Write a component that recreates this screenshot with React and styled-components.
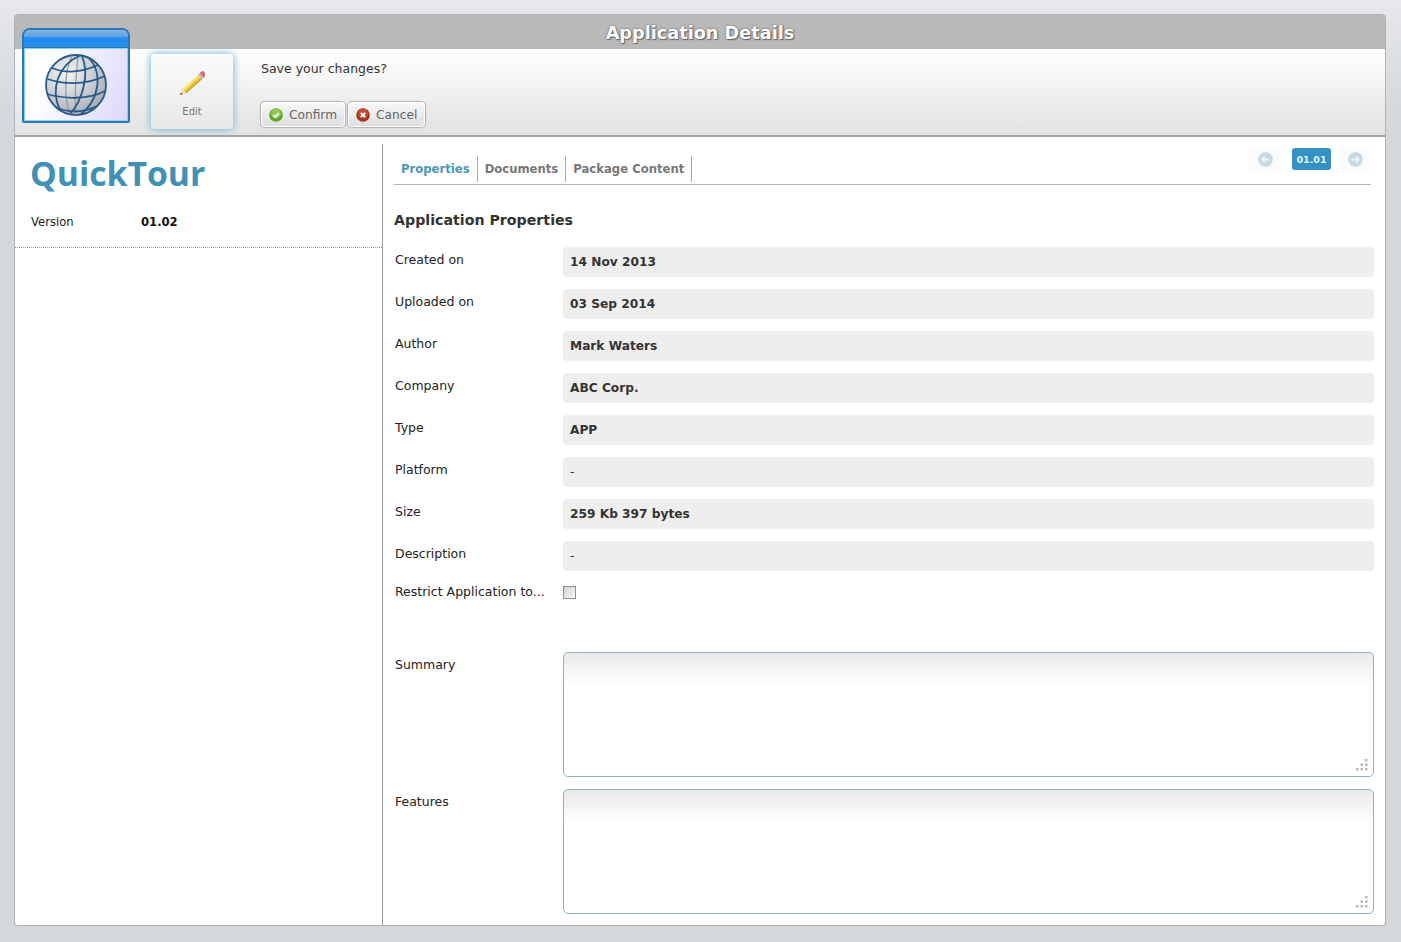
import React from "react";
import styled, { createGlobalStyle } from "styled-components";

const GlobalStyle = createGlobalStyle`
  html, body {
    margin: 0;
    padding: 0;
  }
  body {
    background: linear-gradient(#e6e8eb, #d5d8db 120px);
    min-height: 942px;
    font-family: "DejaVu Sans", Verdana, sans-serif;
    color: #222;
  }
`;

const properties = [
  { label: "Created on", value: "14 Nov 2013" },
  { label: "Uploaded on", value: "03 Sep 2014" },
  { label: "Author", value: "Mark Waters" },
  { label: "Company", value: "ABC Corp." },
  { label: "Type", value: "APP" },
  { label: "Platform", value: "-", plain: true },
  { label: "Size", value: "259 Kb 397 bytes" },
  { label: "Description", value: "-", plain: true },
];

function Globe() {
  return (
    <svg width="64" height="64" viewBox="0 0 64 64">
      <defs>
        <radialGradient id="globeFill" cx="0.35" cy="0.3" r="0.85">
          <stop offset="0" stopColor="#f4f5f6" />
          <stop offset="0.6" stopColor="#c2c6cb" />
          <stop offset="1" stopColor="#98a0a9" />
        </radialGradient>
      </defs>
      <circle cx="32" cy="32" r="30" fill="url(#globeFill)" stroke="#27598a" strokeWidth="1.800" />
      <g fill="none" stroke="#959ba1" strokeWidth="1.300">
        <path d="M28 2.500 C20 20 20 44 26 61" />
        <path d="M34 2.500 C32 22 30 44 32 62" />
      </g>
      <g fill="none" stroke="#27598a" strokeWidth="1.800">
        <path d="M8 15 C20 20 36 20 54 12" />
        <path d="M3.500 26 C18 31 40 33 61 23" />
        <path d="M3 41 C20 46 44 47 61 38" />
        <path d="M11 54 C24 60 40 60 53 53" />
        <path d="M36 2.500 C14 12 6 36 16 57" />
        <path d="M38 3 C46 22 38 48 26 61" />
        <path d="M45 5 C60 22 54 48 37 61" />
      </g>
    </svg>
  );
}

function Pencil() {
  return (
    <svg width="26" height="26" viewBox="0 0 26 26">
      <g transform="translate(1 25) rotate(-42)">
        <path d="M0 0 L6 -3 V3 Z" fill="#ead9b4" />
        <path d="M0 0 L2.500 -1.200 V1.200 Z" fill="#4a4a4a" />
        <rect x="6" y="-3" width="21" height="2" fill="#fbe684" />
        <rect x="6" y="-1" width="21" height="2" fill="#f4cc35" />
        <rect x="6" y="1" width="21" height="2" fill="#d9a520" />
        <rect x="27" y="-3" width="2" height="6" fill="#b9b9b9" />
        <path d="M29 -3 H32 Q33.500 -3 33.500 -1.500 V1.500 Q33.500 3 32 3 H29 Z" fill="#cf6f70" />
      </g>
    </svg>
  );
}

function ConfirmIcon() {
  return (
    <svg width="14" height="14" viewBox="0 0 14 14">
      <circle cx="7" cy="7" r="6.800" fill="#5da52c" />
      <circle cx="7" cy="5.500" r="5" fill="#8ccb4e" />
      <path d="M4.300 7.200 L6.200 9.100 L9.800 5.200" fill="none" stroke="#fff" strokeWidth="1.800" />
    </svg>
  );
}

function CancelIcon() {
  return (
    <svg width="14" height="14" viewBox="0 0 14 14">
      <circle cx="7" cy="7" r="6.800" fill="#a8341a" />
      <circle cx="7" cy="5.500" r="5" fill="#c2512f" />
      <path d="M4.800 4.800 L9.200 9.200 M9.200 4.800 L4.800 9.200" fill="none" stroke="#fff" strokeWidth="1.900" />
    </svg>
  );
}

function ArrowIcon({ right }) {
  return (
    <svg width="15" height="15" viewBox="0 0 15 15">
      <circle cx="7.500" cy="7.500" r="7.300" fill="#c3d9e6" />
      <path
        d={right ? "M3.500 7.500 H11 M8 4.500 L11 7.500 L8 10.500" : "M11.500 7.500 H4 M7 4.500 L4 7.500 L7 10.500"}
        fill="none"
        stroke="#eef5f9"
        strokeWidth="1.800"
      />
    </svg>
  );
}

function Grip() {
  return (
    <GripIcon width="12" height="12" viewBox="0 0 12 12">
      <g fill="#b8b8b8">
        <rect x="9" y="0" width="2.500" height="2.500" />
        <rect x="4.500" y="4.500" width="2.500" height="2.500" />
        <rect x="9" y="4.500" width="2.500" height="2.500" />
        <rect x="0" y="9" width="2.500" height="2.500" />
        <rect x="4.500" y="9" width="2.500" height="2.500" />
        <rect x="9" y="9" width="2.500" height="2.500" />
      </g>
    </GripIcon>
  );
}

export default function App() {
  return (
    <>
      <GlobalStyle />
      <Page>
        <Panel>
          <TitleBar>Application Details</TitleBar>
          <AppIcon>
            <AppIconTop />
            <AppIconBody>
              <Globe />
            </AppIconBody>
          </AppIcon>
          <Toolbar>
            <EditButton>
              <Pencil />
              <span>Edit</span>
            </EditButton>
            <Prompt>
              <PromptText>Save your changes?</PromptText>
              <PromptActions>
                <ActionButton>
                  <ConfirmIcon />
                  Confirm
                </ActionButton>
                <ActionButton>
                  <CancelIcon />
                  Cancel
                </ActionButton>
              </PromptActions>
            </Prompt>
          </Toolbar>
          <Content>
            <Sidebar>
              <AppName>QuickTour</AppName>
              <VersionRow>
                <VersionLabel>Version</VersionLabel>
                <VersionValue>01.02</VersionValue>
              </VersionRow>
            </Sidebar>
            <Main>
              <TabBar>
                <Tab $active>Properties</Tab>
                <Tab>Documents</Tab>
                <Tab>Package Content</Tab>
                <Pager>
                  <PagerArrow>
                    <ArrowIcon />
                  </PagerArrow>
                  <PagerCurrent>01.01</PagerCurrent>
                  <PagerArrow $next>
                    <ArrowIcon right />
                  </PagerArrow>
                </Pager>
              </TabBar>
              <SectionTitle>Application Properties</SectionTitle>
              <Rows>
                {properties.map((prop) => (
                  <Row key={prop.label}>
                    <Label>{prop.label}</Label>
                    <Value $plain={prop.plain}>{prop.value}</Value>
                  </Row>
                ))}
              </Rows>
              <CheckRow>
                <CheckLabel>Restrict Application to...</CheckLabel>
                <Check type="checkbox" />
              </CheckRow>
              <AreaRow>
                <Label>Summary</Label>
                <AreaBox>
                  <Area />
                  <Grip />
                </AreaBox>
              </AreaRow>
              <AreaRow>
                <Label>Features</Label>
                <AreaBox>
                  <Area />
                  <Grip />
                </AreaBox>
              </AreaRow>
            </Main>
          </Content>
        </Panel>
      </Page>
    </>
  );
}

const Page = styled.div`
  padding: 15px 16px 0 15px;
  width: 1370px;
`;

const Panel = styled.div`
  position: relative;
  width: 1370px;
  height: 910px;
  background: #fff;
  border-radius: 3px;
  box-shadow: 0 0 0 1px #b0b2b4;
  overflow: hidden;
`;

const TitleBar = styled.div`
  height: 34px;
  background: #b9b9b9;
  color: #fff;
  font-size: 17.700px;
  font-weight: bold;
  line-height: 36px;
  text-align: center;
  text-shadow: 0 0 2px #555, 1px 1px 1px #666;
`;

const AppIcon = styled.div`
  position: absolute;
  left: 7px;
  top: 13px;
  width: 108px;
  height: 95px;
  box-sizing: border-box;
  display: flex;
  flex-direction: column;
  border: 2px solid #2a78b8;
  border-radius: 8px 8px 2px 2px;
  overflow: hidden;
`;

const AppIconTop = styled.div`
  height: 17px;
  background: linear-gradient(#7db4e6, #5ea3e0 40%, #1e8cf0 45%, #2a90ea);
  border-bottom: 1px solid #2a78b8;
`;

const AppIconBody = styled.div`
  flex: 1;
  display: flex;
  align-items: center;
  justify-content: center;
  background: linear-gradient(110deg, #fff 20%, #dcd8fb);
  border: 1px solid #8fd0f2;
`;

const Toolbar = styled.div`
  height: 88px;
  box-sizing: border-box;
  display: flex;
  padding: 5px 0 0 136px;
  background: linear-gradient(#fff, #e2e2e2);
  border-bottom: 2px solid #a4a4a4;
`;

const EditButton = styled.div`
  width: 82px;
  height: 75px;
  box-sizing: border-box;
  display: flex;
  flex-direction: column;
  align-items: center;
  gap: 10px;
  padding-top: 16px;
  border-radius: 4px;
  background: linear-gradient(#fbfbfb, #e8e8e8);
  box-shadow: 0 0 7px 1px #82bdd8;
  color: #777;
  font-size: 10px;
`;

const Prompt = styled.div`
  margin-left: 28px;
  display: flex;
  flex-direction: column;
`;

const PromptText = styled.div`
  font-size: 12.500px;
  line-height: 16px;
  margin-top: 7px;
  color: #333;
`;

const PromptActions = styled.div`
  display: flex;
  gap: 3px;
  margin-top: 25px;
`;

const ActionButton = styled.div`
  height: 25px;
  box-sizing: border-box;
  display: flex;
  align-items: center;
  gap: 6px;
  padding: 0 7px;
  background: linear-gradient(#f8f8f8, #dedede);
  border: 1px solid #fff;
  box-shadow: 0 0 1px 1px #b0b0b0;
  border-radius: 4px;
  color: #666;
  font-size: 12.200px;
`;

const Content = styled.div`
  display: flex;
  height: 788px;
  box-sizing: border-box;
  padding-top: 7px;
`;

const Sidebar = styled.div`
  width: 367px;
  height: 104px;
  box-sizing: border-box;
  border-bottom: 1px dotted #999;
  padding: 0 0 0 16px;
  flex-shrink: 0;
`;

const AppName = styled.div`
  color: #4190b5;
  font-family: "Open Sans", "DejaVu Sans", sans-serif;
  font-size: 33.700px;
  font-weight: 700;
  line-height: 44px;
  margin: 7px 0 0 -1px;
`;

const VersionRow = styled.div`
  display: flex;
  font-size: 11.600px;
  margin-top: 20px;
`;

const VersionLabel = styled.div`
  width: 110px;
  color: #222;
`;

const VersionValue = styled.div`
  font-weight: bold;
  color: #111;
`;

const Main = styled.div`
  flex: 1;
  border-left: 1px solid #9a9a9a;
  padding: 0 11px 0 11px;
`;

const TabBar = styled.div`
  position: relative;
  display: flex;
  align-items: stretch;
  height: 41px;
  box-sizing: border-box;
  margin-right: 3px;
  padding: 12px 0 2px;
  border-bottom: 1px solid #b4b4b4;
`;

const Tab = styled.div`
  padding: 0 7px;
  border-right: 1px solid #aaa;
  font-size: 11.650px;
  font-weight: bold;
  line-height: 27px;
  color: ${(p) => (p.$active ? "#4a97bb" : "#777")};
`;

const Pager = styled.div`
  position: absolute;
  right: 0;
  top: 4px;
  display: flex;
`;

const PagerArrow = styled.div`
  width: 32px;
  height: 23px;
  margin-left: ${(p) => (p.$next ? "8px" : "0")};
  margin-right: ${(p) => (p.$next ? "0" : "11px")};
  display: flex;
  align-items: center;
  justify-content: center;
  background: #fbfbfb;
  border-radius: 4px;
`;

const PagerCurrent = styled.div`
  width: 39px;
  height: 22px;
  background: #3391c5;
  border-radius: 3px;
  color: #e6f3fa;
  font-size: 9.500px;
  font-weight: bold;
  line-height: 23px;
  text-align: center;
`;

const SectionTitle = styled.h2`
  margin: 24px 0 16px;
  font-size: 14.200px;
  font-weight: bold;
  line-height: 22px;
  color: #333;
`;

const Rows = styled.div`
  display: flex;
  flex-direction: column;
  gap: 12px;
`;

const Row = styled.div`
  display: grid;
  grid-template-columns: 169px 811px;
  height: 30px;
`;

const Label = styled.div`
  padding-left: 1px;
  font-size: 12.500px;
  line-height: 25px;
  color: #222;
`;

const Value = styled.div`
  background: #eeeeee;
  border-radius: 4px;
  padding: 0 7px;
  font-size: 12.200px;
  font-weight: ${(p) => (p.$plain ? "normal" : "bold")};
  line-height: 30px;
  color: #333;
`;

const CheckRow = styled.div`
  display: grid;
  grid-template-columns: 169px 1fr;
  height: 71px;
  margin-top: 10px;
`;

const CheckLabel = styled(Label)`
  line-height: 21px;
`;

const Check = styled.input`
  appearance: none;
  width: 13px;
  height: 13px;
  margin: 5px 0 0;
  background: linear-gradient(135deg, #d2d2d2, #f8f8f8);
  border: 1px solid #8f8f8f;
  box-sizing: border-box;
`;

const AreaRow = styled.div`
  display: grid;
  grid-template-columns: 169px 811px;
  margin-bottom: 12px;
`;

const AreaBox = styled.div`
  position: relative;
  height: 125px;
`;

const Area = styled.textarea`
  display: block;
  width: 100%;
  height: 100%;
  box-sizing: border-box;
  resize: none;
  border: 1px solid #8fb4c0;
  border-radius: 5px;
  outline: none;
  background: linear-gradient(#e9e9ea, #fff 32px);
`;

const GripIcon = styled.svg`
  position: absolute;
  right: 6px;
  bottom: 6px;
`;
